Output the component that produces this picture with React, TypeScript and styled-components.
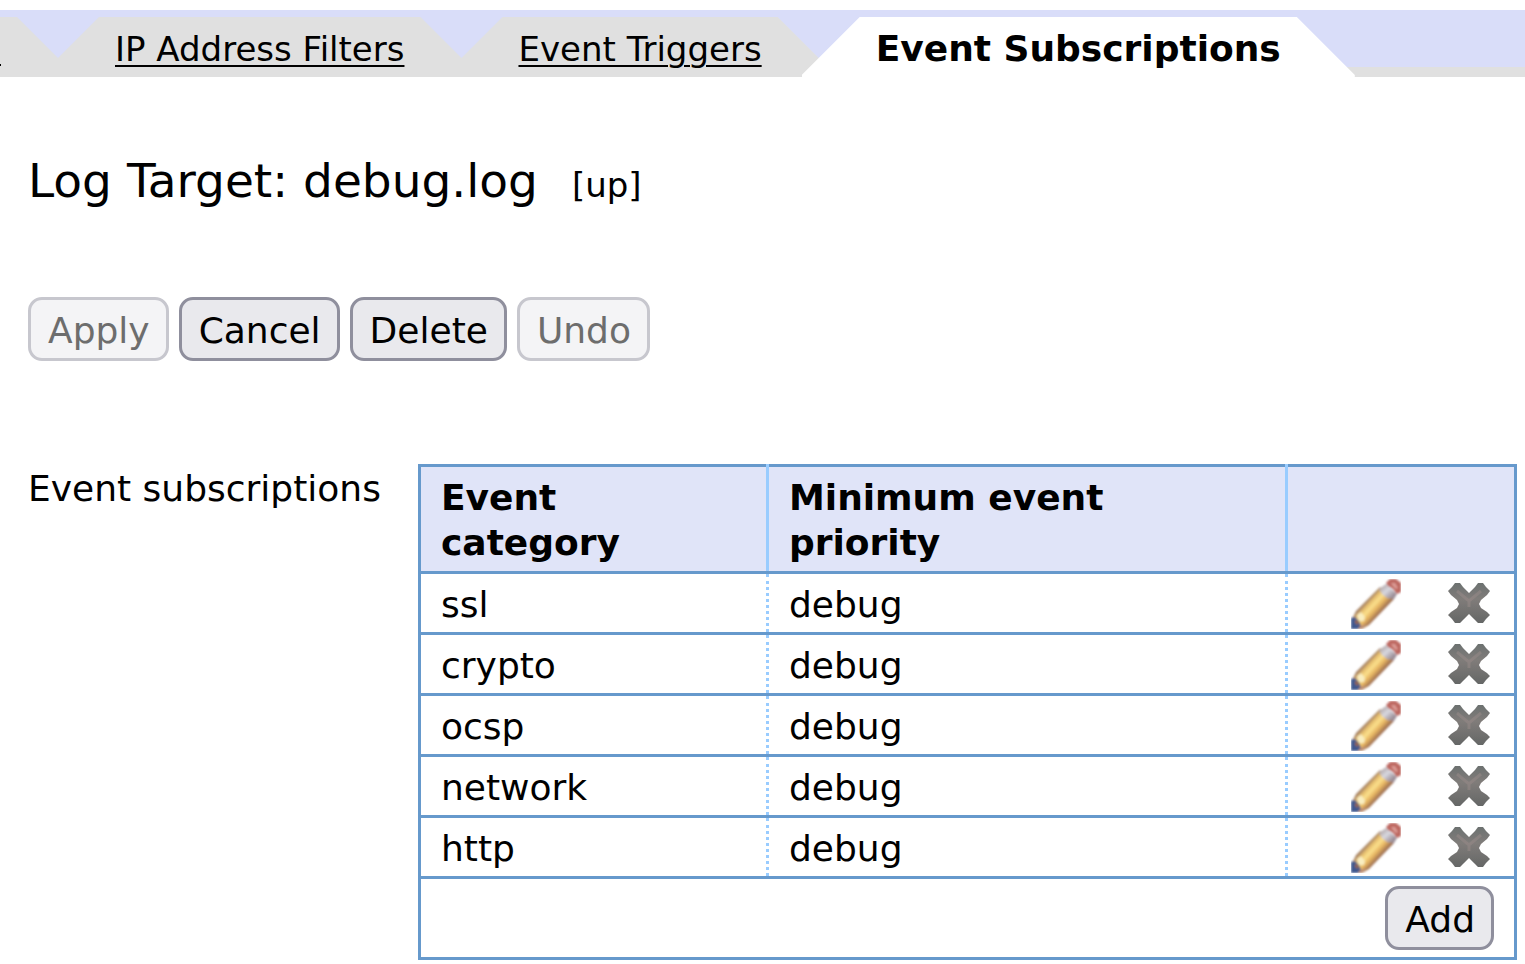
import React from "react";
import styled, { createGlobalStyle } from "styled-components";

const GlobalStyle = createGlobalStyle`
  * { box-sizing: border-box; }
  body {
    margin: 0;
    background: #fff;
    color: #000;
    font-family: Verdana, "DejaVu Sans", sans-serif;
    font-size: 36px;
    line-height: 45px;
  }
`;

const Page = styled.div`
  padding-top: 10px;
`;

const TabBar = styled.nav`
  display: flex;
  height: 67px;
  padding-top: 7px;
  overflow: hidden;
  background: linear-gradient(to top, #e0e0e0 10px, #d9ddf9 10px);
`;

const Tab = styled.div<{ $active?: boolean; $edge?: boolean }>`
  flex: none;
  height: 60px;
  padding: ${(p) => (p.$edge ? "0 74px 0 0" : "0 74px")};
  margin-right: -34px;
  position: relative;
  background: ${(p) => (p.$active ? "#fff" : "#e0e0e0")};
  clip-path: ${(p) =>
    p.$edge
      ? "polygon(0 0, calc(100% - 58px) 0, 100% 58px, 100% 100%, 0 100%)"
      : "polygon(58px 0, calc(100% - 58px) 0, 100% 58px, 100% 100%, 0 100%, 0 58px)"};
  font-size: ${(p) => (p.$active ? "36px" : "34px")};
  font-weight: ${(p) => (p.$active ? "bold" : "normal")};
  line-height: 64px;
  white-space: nowrap;
`;

const TabLink = styled.a`
  color: #000;
  text-decoration: underline;
  text-decoration-thickness: 2px;
  text-underline-offset: 4px;
`;

const EdgeLink = styled.a`
  display: block;
  width: 1px;
  height: 49px;
  border-bottom: 2px solid #000;
`;

const Content = styled.main`
  padding: 74px 8px 4px 28px;
`;

const Heading = styled.header`
  display: flex;
  align-items: baseline;
  gap: 34px;
`;

const Title = styled.h1`
  margin: 0;
  font-size: 47px;
  line-height: 60px;
  font-weight: normal;
`;

const Status = styled.span`
  font-size: 34px;
`;

const Actions = styled.div`
  display: flex;
  gap: 10px;
  margin: 86px 0 103px;
`;

const Button = styled.button`
  height: 64px;
  padding: 2px 16px 0 17px;
  border: 3px solid #8f8f9d;
  border-radius: 14px;
  background: #e9e9ed;
  color: #000;
  font: inherit;
  &:disabled {
    border-color: #c7c7ce;
    background: #f4f4f6;
    color: #6d6d6d;
  }
`;

const Field = styled.section`
  display: grid;
  grid-template-columns: 390px 1fr;
  align-items: start;
`;

const FieldLabel = styled.h2`
  margin: 0;
  padding-top: 2px;
  font-size: 36px;
  font-weight: normal;
`;

const Table = styled.table`
  width: 100%;
  table-layout: fixed;
  border-collapse: collapse;
  border: 3px solid #6699cc;
`;

const HeadCell = styled.th<{ $width: string }>`
  width: ${(p) => p.$width};
  height: 107px;
  padding: 8px 20px 5px;
  border-left: 3px solid #99ccff;
  border-bottom: 3px solid #6699cc;
  background: #e0e4f8;
  text-align: left;
  vertical-align: top;
  &:first-child { border-left-color: #6699cc; }
`;

const Cell = styled.td`
  height: 61px;
  padding: 2px 20px 0;
  border-left: 3px dotted #99ccff;
  border-bottom: 3px solid #6699cc;
  &:first-child { border-left: 3px solid #6699cc; }
`;

const ToolCell = styled(Cell)`
  padding: 2px 24px 0 20px;
`;

const FootCell = styled.td`
  height: 81px;
  padding: 0 20px;
`;

const Tools = styled.div`
  display: flex;
  justify-content: flex-end;
  align-items: center;
  gap: 47px;
`;

const IconButton = styled.button`
  display: flex;
  padding: 0;
  border: 0;
  background: none;
`;

const Pencil = () => (
  <svg width="50" height="50" viewBox="0 0 50 50" aria-hidden="true">
    <defs>
      <linearGradient id="wood" gradientUnits="userSpaceOnUse" x1="16" y1="22" x2="29" y2="34">
        <stop offset="0" stopColor="#a68263" />
        <stop offset=".2" stopColor="#e8c070" />
        <stop offset=".42" stopColor="#fbe08c" />
        <stop offset=".68" stopColor="#e6b562" />
        <stop offset="1" stopColor="#9b6c50" />
      </linearGradient>
      <linearGradient id="metal" gradientUnits="userSpaceOnUse" x1="31" y1="7" x2="41" y2="18">
        <stop offset="0" stopColor="#b2a7a8" />
        <stop offset=".45" stopColor="#d8d8e0" />
        <stop offset="1" stopColor="#9c8f98" />
      </linearGradient>
      <filter id="soft" x="-5%" y="-5%" width="110%" height="110%">
        <feGaussianBlur stdDeviation="0.8" />
      </filter>
    </defs>
    <g filter="url(#soft)">
      <path d="M1 40 5 32 29 8 43 20 18 46 11 50 5 50Z" fill="url(#wood)" />
      <path d="M6 36 10 33 14 38 13 42 8 42Z" fill="#f9eec1" />
      <path d="M0 39 4 38 8 42 10 47 7 50 0 50Z" fill="#41588e" />
      <path d="M4 41 8 42 7 46 4 44Z" fill="#96654d" />
      <path d="M8 48 15 45 12 49 8 50Z" fill="#b98b77" />
      <path d="M28 10 35 5 46 15 43 20 36 19 31 15Z" fill="url(#metal)" />
      <path d="M35 4 39 0 45 0 50 4 50 13 46 15 42 10 37 7Z" fill="#bd6761" />
      <path d="M40 4 44 4 47 9 45 10 42 7Z" fill="#dc9c96" />
    </g>
  </svg>
);

const Cross = () => (
  <svg width="42" height="42" viewBox="0 0 42 42" aria-hidden="true">
    <defs>
      <linearGradient id="steel" x1="0" y1="0" x2="0" y2="1">
        <stop offset="0" stopColor="#6c7170" />
        <stop offset=".4" stopColor="#807c7a" />
        <stop offset="1" stopColor="#656766" />
      </linearGradient>
      <filter id="crossSoft" x="-5%" y="-5%" width="110%" height="110%">
        <feGaussianBlur stdDeviation="0.7" />
      </filter>
    </defs>
    <g filter="url(#crossSoft)">
      <path
        d="M7 0 12 0 15 4 21 10 27 4 30 0 35 0 38 4 42 8 39 12 33 17 31 21 33 25 39 29 42 32 38 36 35 40 30 40 27 37 21 31 15 37 12 40 7 40 4 36 0 32 3 29 9 25 11 21 9 17 3 12 0 8 4 4Z"
        fill="url(#steel)"
      />
      <path d="M9 8 21 18 33 8M21 18V24" fill="none" stroke="#998c89" strokeWidth="3" opacity=".5" />
    </g>
  </svg>
);

const subscriptions = [
  { category: "ssl", priority: "debug" },
  { category: "crypto", priority: "debug" },
  { category: "ocsp", priority: "debug" },
  { category: "network", priority: "debug" },
  { category: "http", priority: "debug" },
];

export default function App() {
  return (
    <Page>
      <GlobalStyle />
      <TabBar>
        <Tab $edge>
          <EdgeLink href="#previous" aria-label="Previous tab" />
        </Tab>
        <Tab>
          <TabLink href="#filters">IP Address Filters</TabLink>
        </Tab>
        <Tab>
          <TabLink href="#triggers">Event Triggers</TabLink>
        </Tab>
        <Tab $active aria-current="page">Event Subscriptions</Tab>
      </TabBar>
      <Content>
        <Heading>
          <Title>Log Target: debug.log</Title>
          <Status>[up]</Status>
        </Heading>
        <Actions>
          <Button type="button" disabled>Apply</Button>
          <Button type="button">Cancel</Button>
          <Button type="button">Delete</Button>
          <Button type="button" disabled>Undo</Button>
        </Actions>
        <Field>
          <FieldLabel id="subscriptions">Event subscriptions</FieldLabel>
          <Table aria-labelledby="subscriptions">
            <thead>
              <tr>
                <HeadCell $width="31.75%">Event category</HeadCell>
                <HeadCell $width="47.35%">Minimum event priority</HeadCell>
                <HeadCell $width="20.9%" />
              </tr>
            </thead>
            <tbody>
              {subscriptions.map((s) => (
                <tr key={s.category}>
                  <Cell>{s.category}</Cell>
                  <Cell>{s.priority}</Cell>
                  <ToolCell>
                    <Tools>
                      <IconButton type="button" aria-label={`Edit ${s.category}`}><Pencil /></IconButton>
                      <IconButton type="button" aria-label={`Delete ${s.category}`}><Cross /></IconButton>
                    </Tools>
                  </ToolCell>
                </tr>
              ))}
            </tbody>
            <tfoot>
              <tr>
                <FootCell colSpan={3}>
                  <Tools>
                    <Button type="button">Add</Button>
                  </Tools>
                </FootCell>
              </tr>
            </tfoot>
          </Table>
        </Field>
      </Content>
    </Page>
  );
}
